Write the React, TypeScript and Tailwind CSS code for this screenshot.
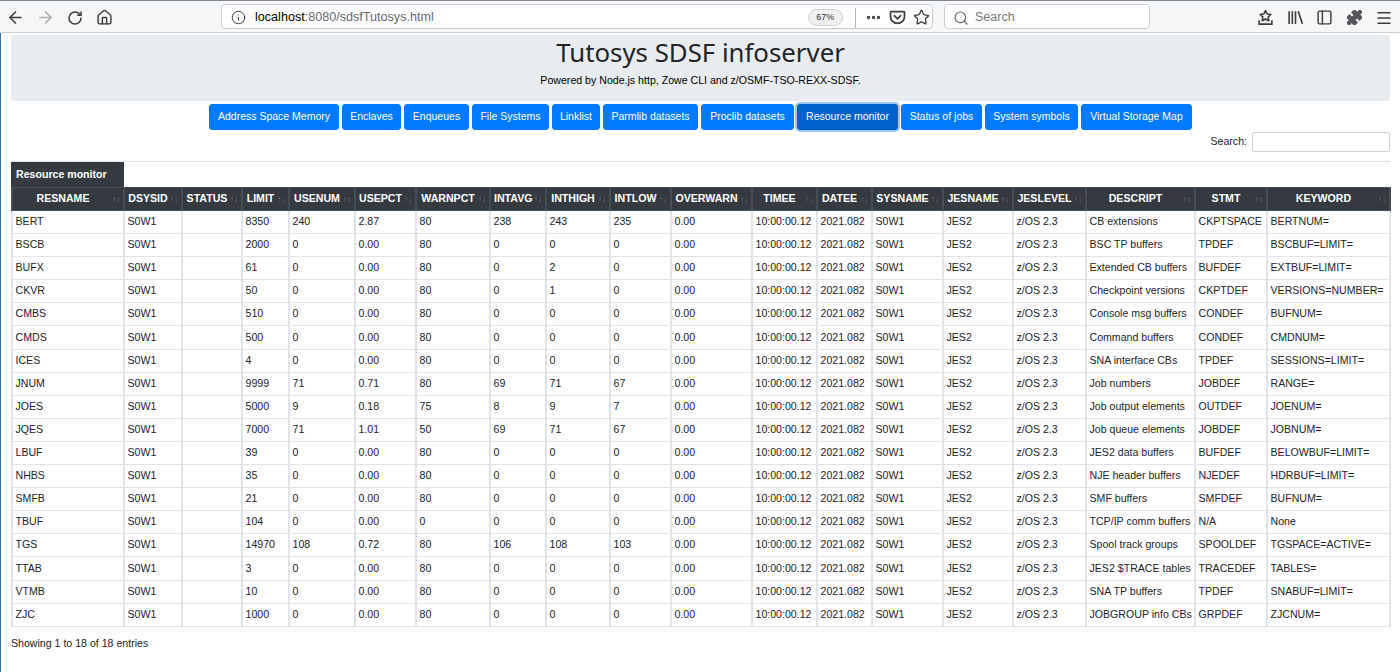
import { ArrowLeft, ArrowRight, RotateCw, Home, Info, Search, Star, PanelLeft, Menu, Puzzle, Ellipsis } from 'lucide-react';

const tabs = [
  { name: 'Address Space Memory', w: 'w-[130px]' },
  { name: 'Enclaves', w: 'w-[59px]' },
  { name: 'Enqueues', w: 'w-[65px]' },
  { name: 'File Systems', w: 'w-[77px]' },
  { name: 'Linklist', w: 'w-[48px]' },
  { name: 'Parmlib datasets', w: 'w-[95px]' },
  { name: 'Proclib datasets', w: 'w-[93px]' },
  { name: 'Resource monitor', w: 'w-[101px]', active: true },
  { name: 'Status of jobs', w: 'w-[81px]' },
  { name: 'System symbols', w: 'w-[93px]' },
  { name: 'Virtual Storage Map', w: 'w-[111px]' },
];

const columns = [
  { name: 'RESNAME', w: 'w-[112px]' },
  { name: 'DSYSID', w: 'w-[58px]' },
  { name: 'STATUS', w: 'w-[60px]' },
  { name: 'LIMIT', w: 'w-[47px]' },
  { name: 'USENUM', w: 'w-[66px]' },
  { name: 'USEPCT', w: 'w-[61px]' },
  { name: 'WARNPCT', w: 'w-[74px]' },
  { name: 'INTAVG', w: 'w-[56px]' },
  { name: 'INTHIGH', w: 'w-[64px]' },
  { name: 'INTLOW', w: 'w-[61px]' },
  { name: 'OVERWARN', w: 'w-[81px]' },
  { name: 'TIMEE', w: 'w-[65px]' },
  { name: 'DATEE', w: 'w-[55px]' },
  { name: 'SYSNAME', w: 'w-[71px]' },
  { name: 'JESNAME', w: 'w-[70px]' },
  { name: 'JESLEVEL', w: 'w-[73px]' },
  { name: 'DESCRIPT', w: 'w-[109px]' },
  { name: 'STMT', w: 'w-[72px]' },
  { name: 'KEYWORD', w: 'w-[123px]' },
];

// resname, limit, usenum, usepct, warnpct, intavg, inthigh, intlow, descript, stmt, keyword
const rows = [
  ['BERT', '8350', '240', '2.87', '80', '238', '243', '235', 'CB extensions', 'CKPTSPACE', 'BERTNUM='],
  ['BSCB', '2000', '0', '0.00', '80', '0', '0', '0', 'BSC TP buffers', 'TPDEF', 'BSCBUF=LIMIT='],
  ['BUFX', '61', '0', '0.00', '80', '0', '2', '0', 'Extended CB buffers', 'BUFDEF', 'EXTBUF=LIMIT='],
  ['CKVR', '50', '0', '0.00', '80', '0', '1', '0', 'Checkpoint versions', 'CKPTDEF', 'VERSIONS=NUMBER='],
  ['CMBS', '510', '0', '0.00', '80', '0', '0', '0', 'Console msg buffers', 'CONDEF', 'BUFNUM='],
  ['CMDS', '500', '0', '0.00', '80', '0', '0', '0', 'Command buffers', 'CONDEF', 'CMDNUM='],
  ['ICES', '4', '0', '0.00', '80', '0', '0', '0', 'SNA interface CBs', 'TPDEF', 'SESSIONS=LIMIT='],
  ['JNUM', '9999', '71', '0.71', '80', '69', '71', '67', 'Job numbers', 'JOBDEF', 'RANGE='],
  ['JOES', '5000', '9', '0.18', '75', '8', '9', '7', 'Job output elements', 'OUTDEF', 'JOENUM='],
  ['JQES', '7000', '71', '1.01', '50', '69', '71', '67', 'Job queue elements', 'JOBDEF', 'JOBNUM='],
  ['LBUF', '39', '0', '0.00', '80', '0', '0', '0', 'JES2 data buffers', 'BUFDEF', 'BELOWBUF=LIMIT='],
  ['NHBS', '35', '0', '0.00', '80', '0', '0', '0', 'NJE header buffers', 'NJEDEF', 'HDRBUF=LIMIT='],
  ['SMFB', '21', '0', '0.00', '80', '0', '0', '0', 'SMF buffers', 'SMFDEF', 'BUFNUM='],
  ['TBUF', '104', '0', '0.00', '0', '0', '0', '0', 'TCP/IP comm buffers', 'N/A', 'None'],
  ['TGS', '14970', '108', '0.72', '80', '106', '108', '103', 'Spool track groups', 'SPOOLDEF', 'TGSPACE=ACTIVE='],
  ['TTAB', '3', '0', '0.00', '80', '0', '0', '0', 'JES2 $TRACE tables', 'TRACEDEF', 'TABLES='],
  ['VTMB', '10', '0', '0.00', '80', '0', '0', '0', 'SNA TP buffers', 'TPDEF', 'SNABUF=LIMIT='],
  ['ZJC', '1000', '0', '0.00', '80', '0', '0', '0', 'JOBGROUP info CBs', 'GRPDEF', 'ZJCNUM='],
];

function Toolbar() {
  return (
    <div className="h-[33px] bg-[#f5f6f7] border-t border-t-[#7f8790] border-b border-b-[#cfd0d2] flex items-center text-[#3d3d3f] shrink-0">
      <ArrowLeft className="w-[19px] h-[19px] ml-[6px] mt-[2px]" strokeWidth={2} />
      <ArrowRight className="w-[19px] h-[19px] ml-[11px] mt-[2px] text-[#a9abad]" strokeWidth={2} />
      <RotateCw className="w-[16px] h-[16px] ml-[12px] mt-[2px]" strokeWidth={2.2} />
      <Home className="w-[17px] h-[17px] ml-[13px] mt-[2px]" strokeWidth={2} />

      {/* url bar */}
      <div className="ml-[108px] w-[712px] h-[25px] bg-white border border-[#cdced0] rounded-[4px] flex items-center">
        <Info className="w-[15px] h-[15px] ml-[9px] mt-[2px]" strokeWidth={1.6} />
        <span className="ml-[9px] pt-[2px] text-[12.6px] text-black">localhost</span>
        <span className="pt-[2px] text-[12.6px] text-[#6a6a70]">:8080/sdsfTutosys.html</span>
        <span className="ml-[374px] mt-[2px] w-[35px] h-[17px] rounded-full bg-[#f0f0f1] border border-[#cfcfd1] text-[9px] text-[#333] flex items-center justify-center">67%</span>
        <span className="ml-[12px] mt-[2px] w-px h-[20px] bg-[#b5b6b8]" />
        <Ellipsis className="w-[17px] h-[17px] ml-[9px] mt-[2px]" strokeWidth={2.6} />
        <svg viewBox="0 0 16 16" className="w-[17px] h-[17px] ml-[7px] mt-[2px]" fill="none" stroke="currentColor" strokeWidth="1.6">
          <path d="M2 2.5h12a.6.6 0 0 1 .6.6V7a6.6 6.6 0 0 1-13.2 0V3.1a.6.6 0 0 1 .6-.6z" />
          <path d="M5 6.2l3 3 3-3" strokeLinecap="round" strokeLinejoin="round" />
        </svg>
        <Star className="w-[17px] h-[17px] ml-[7px] mt-[2px]" strokeWidth={1.8} />
      </div>

      {/* search bar */}
      <div className="ml-[11px] w-[206px] h-[25px] bg-white border border-[#cdced0] rounded-[4px] flex items-center">
        <Search className="w-[16px] h-[16px] ml-[8px] mt-[2px] text-[#66676a]" strokeWidth={1.8} />
        <span className="ml-[6px] pt-[2px] text-[12.5px] text-[#77787b]">Search</span>
      </div>

      <svg viewBox="0 0 16 16" className="w-[17px] h-[17px] ml-[107px] mt-[2px]" fill="none" stroke="currentColor" strokeWidth="1.5">
        <path d="M8 1.5l1.6 3.2 3.4.5-2.5 2.4.6 3.4L8 9.4l-3.1 1.6.6-3.4L3 5.2l3.4-.5z" strokeLinejoin="round" />
        <path d="M2 11v3.2h12V11" strokeLinecap="round" />
      </svg>
      <svg viewBox="0 0 16 16" className="w-[17px] h-[17px] ml-[13px] mt-[2px]" fill="none" stroke="currentColor" strokeWidth="1.5">
        <path d="M2 2v12M5 2v12M8 2v12M10.5 2l4 12" />
      </svg>
      <PanelLeft className="w-[17px] h-[17px] ml-[12px] mt-[2px]" strokeWidth={2} />
      <Puzzle className="w-[17px] h-[17px] ml-[13px] mt-[2px] text-[#55565a] fill-[#55565a]" strokeWidth={1.5} />
      <Menu className="w-[18px] h-[18px] ml-[12px] mt-[2px]" strokeWidth={2} />
    </div>
  );
}

export default function App() {
  return (
    <div className="h-[672px] w-[1400px] overflow-hidden bg-white text-[#212529] flex flex-col font-['Liberation_Sans',Arial,sans-serif]">
      <Toolbar />
      <div className="flex-1 border-l border-l-[#3a6ea5] pl-[10px] pr-[10px] pt-[2px]">
        {/* header */}
        <div className="h-[66px] bg-[#e9ecef] rounded-[3px] flex flex-col items-center pt-[1px]">
          <h1 className="text-[25.8px] leading-[32px] text-[#212529] font-['Noto_Sans','Open_Sans',sans-serif]">Tutosys SDSF infoserver</h1>
          <p className="text-[10.6px] leading-[13px] mt-[6px] text-black">Powered by Node.js http, Zowe CLI and z/OSMF-TSO-REXX-SDSF.</p>
        </div>

        {/* buttons */}
        <div className="flex justify-center gap-[3px] mt-[3px]">
          {tabs.map((tab) => (
            <button
              key={tab.name}
              className={`${tab.w} h-[26px] rounded-[3px] text-[10.5px] text-white border ${tab.active ? 'bg-[#0062cc] border-[#005cbf] ring-2 ring-[#9cc6f5]' : 'bg-[#007bff] border-[#007bff]'}`}
            >
              {tab.name}
            </button>
          ))}
        </div>

        {/* search */}
        <div className="flex justify-end items-center h-[20px] mt-[2px]">
          <span className="text-[10.6px] text-[#212529]">Search:</span>
          <div className="w-[138px] h-[20px] ml-[5px] bg-white border border-[#ced4da] rounded-[2px]" />
        </div>

        <div className="border-b border-b-[#dee2e6] h-[10px]" />

        <div className="w-[113px] h-[25px] bg-[#343a40] text-white text-[10.6px] font-bold flex items-center pl-[5px]">
          Resource monitor
        </div>

        <table className="w-[1379px] table-fixed border-collapse text-[10.6px]">
          <colgroup>
            {columns.map((c) => (
              <col key={c.name} className={c.w} />
            ))}
          </colgroup>
          <thead>
            <tr className="h-[23px] bg-[#343a40] text-white">
              {columns.map((c) => (
                <th key={c.name} className="relative border-y border-x-2 border-[#454d55] pl-[3px] pr-[13px] text-center font-bold whitespace-nowrap overflow-hidden">
                  {c.name}
                  <span className="absolute right-[3px] top-[7px] text-[8px] leading-[10px] font-normal text-[#6c757d]">↑↓</span>
                </th>
              ))}
            </tr>
          </thead>
          <tbody>
            {rows.map((r) => (
              <tr key={r[0]} className="h-[23.1px]">
                {[r[0], 'S0W1', '', r[1], r[2], r[3], r[4], r[5], r[6], r[7], '0.00', '10:00:00.12', '2021.082', 'S0W1', 'JES2', 'z/OS 2.3', r[8], r[9], r[10]].map((v, i) => (
                  <td key={i} className="border-y border-x-2 border-[#e0e4e8] px-[2.5px] whitespace-nowrap overflow-hidden">
                    {v}
                  </td>
                ))}
              </tr>
            ))}
          </tbody>
        </table>

        <p className="text-[10.6px] mt-[9px] text-[#212529]">Showing 1 to 18 of 18 entries</p>
      </div>
    </div>
  );
}
